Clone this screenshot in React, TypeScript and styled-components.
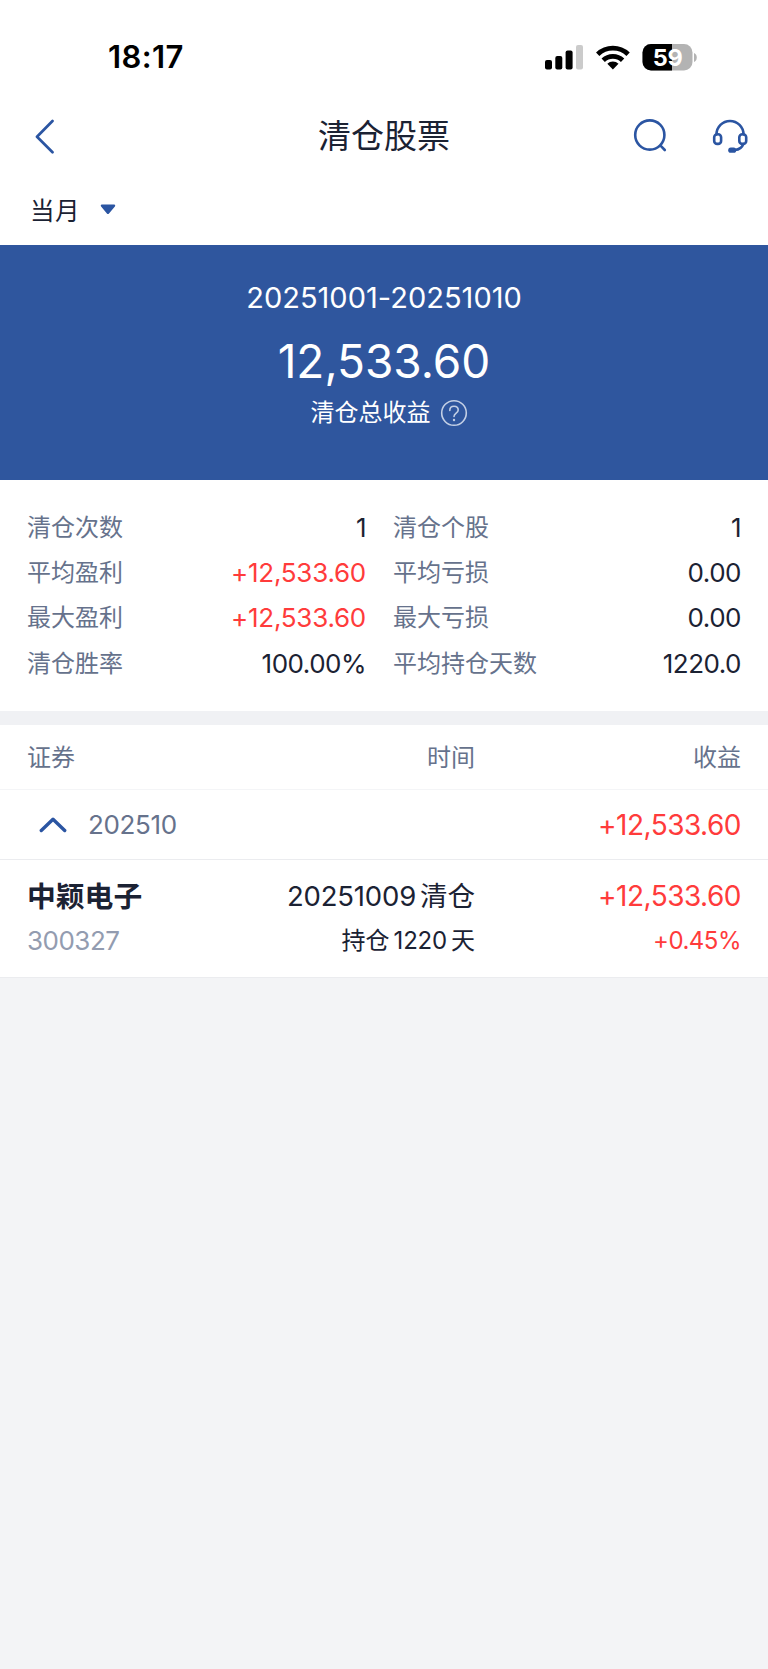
import React from 'react';
import styled, { createGlobalStyle } from 'styled-components';

const GlobalStyle = createGlobalStyle`
  * { box-sizing: border-box; }
  html, body { margin: 0; padding: 0; background: #f3f4f6; }
  body {
    font-family: Inter, "Noto Sans CJK SC", sans-serif;
    color: #1b2233;
    -webkit-font-smoothing: antialiased;
  }
`;

const BLUE = '#2b55a2';
const RED = '#ff3b3b';
const MUTED = '#66728c';

const Screen = styled.main`
  width: 768px;
  min-height: 1669px;
  background: #f3f4f6;
`;

const StatusBar = styled.div`
  height: 100px;
  padding: 14px 71px 0 108px;
  display: flex;
  align-items: center;
  justify-content: space-between;
  background: #fff;
`;

const Clock = styled.span`
  font-size: 31px;
  font-weight: 600;
  line-height: 36px;
  letter-spacing: 0.4px;
  color: #000;
`;

const NavBar = styled.header`
  height: 72px;
  padding: 0 20px 0 34px;
  display: grid;
  grid-template-columns: 1fr auto 1fr;
  align-items: center;
  background: #fff;
`;

const Title = styled.h1`
  margin: 0 0 0 -14px;
  font-size: 33px;
  font-weight: 400;
  line-height: 44px;
`;

const NavActions = styled.div`
  display: flex;
  justify-content: flex-end;
  gap: 45px;
`;

const Filter = styled.div`
  height: 73px;
  padding: 4px 0 0 30px;
  display: flex;
  align-items: center;
  gap: 20px;
  font-size: 24.5px;
  line-height: 34px;
  letter-spacing: 0.5px;
  background: #fff;
  svg { margin-top: -2px; }
`;

const Summary = styled.section`
  height: 235px;
  padding-top: 32px;
  display: flex;
  flex-direction: column;
  align-items: center;
  color: #fff;
  background: #2f569e;
`;

const Period = styled.div`
  font-size: 29px;
  line-height: 42px;
  letter-spacing: 0.02px;
`;

const Total = styled.div`
  margin-top: 11px;
  font-size: 46px;
  line-height: 62px;
  letter-spacing: 0;
`;

const TotalLabel = styled.div`
  margin: 4px 0 0 10px;
  display: flex;
  align-items: center;
  gap: 9px;
  font-size: 24px;
  line-height: 34px;
`;

const Stats = styled.section`
  height: 231px;
  padding: 25px 27px 0 27px;
  display: grid;
  grid-template-columns: 339px 348px;
  grid-auto-rows: 45.4px;
  column-gap: 27px;
  background: #fff;
`;

const Stat = styled.div`
  display: flex;
  align-items: center;
  justify-content: space-between;
`;

const StatLabel = styled.span`
  font-size: 24px;
  line-height: 34px;
  color: ${MUTED};
`;

const StatValue = styled.span<{ $up?: boolean }>`
  font-size: 26px;
  line-height: 34px;
  letter-spacing: ${p => (p.$up ? -0.25 : -0.5)}px;
  color: ${p => (p.$up ? RED : 'inherit')};
`;

const Band = styled.div`
  height: 14px;
  background: #f0f1f4;
`;

const List = styled.section`
  background: #fff;
`;

const Columns = styled.div`
  display: grid;
  grid-template-columns: 200px 248px 266px;
  padding: 0 27px;
`;

const ListHead = styled(Columns)`
  height: 65px;
  padding-top: 1px;
  align-items: center;
  border-bottom: 1px solid #f4f5f7;
  font-size: 24px;
  line-height: 34px;
  color: ${MUTED};
`;

const Cell = styled.div<{ $right?: boolean }>`
  text-align: ${p => (p.$right ? 'right' : 'left')};
  white-space: nowrap;
`;

const Group = styled.div`
  height: 70px;
  padding: 0 27px 0 39px;
  display: flex;
  align-items: center;
  border-bottom: 1px solid #ebecef;
`;

const Month = styled.span`
  margin: 0 auto 0 21px;
  font-size: 26px;
  line-height: 34px;
  letter-spacing: -0.35px;
  color: ${MUTED};
`;

const Profit = styled.span`
  font-size: 28px;
  letter-spacing: -0.5px;
  color: ${RED};
`;

const Holding = styled(Columns)`
  height: 118px;
  padding-top: 15px;
  grid-template-rows: 44px 44px;
  border-bottom: 1px solid #ebecef;
  line-height: 43px;
`;

const Name = styled.span`
  font-size: 28.8px;
  font-weight: 700;
`;

const Code = styled.span`
  font-size: 26px;
  letter-spacing: -0.5px;
  color: #939cb0;
`;

const ClosedOn = styled.span`
  font-size: 27.5px;
`;

const HeldFor = styled.span`
  font-size: 24px;
`;

const Digits = styled.span<{ $before?: number }>`
  margin: 0 4px 0 ${p => p.$before ?? 0}px;
  letter-spacing: -0.2px;
`;

const Rate = styled.span`
  font-size: 24px;
  letter-spacing: -0.5px;
  color: ${RED};
`;

const StatusIcons = () => (
  <svg width="153" height="28" viewBox="544 42 153 28">
    <rect x="545" y="59" width="7" height="9.5" rx="2" />
    <rect x="555.3" y="55" width="7" height="13.5" rx="2" />
    <rect x="565.6" y="49.5" width="7" height="19" rx="2" />
    <rect x="576" y="44" width="7" height="24.5" rx="2" fill="#cbcbcb" />
    <g fill="none" stroke="#000" strokeWidth="4.8">
      <path d="M597.7 53.2A22 22 0 0 1 628.1 53.2" />
      <path d="M603.2 59.2A14 14 0 0 1 622.6 59.2" />
    </g>
    <path d="M612.9 68.4l-5.6-5.6a8 8 0 0 1 11.2 0z" />
    <clipPath id="level"><rect x="642" y="42" width="30" height="28" /></clipPath>
    <rect x="642.5" y="43" width="50" height="26.5" rx="8.5" fill="#b3b3b3" />
    <rect x="642.5" y="43" width="50" height="26.5" rx="8.5" clipPath="url(#level)" />
    <path d="M694 52c3.7 1 3.7 8 0 9z" fill="#b3b3b3" />
    <text x="667.6" y="64.7" textAnchor="middle" fontSize="23.5" fontWeight="650" fill="#fff" letterSpacing="-.2">59</text>
  </svg>
);

const BackIcon = () => (
  <svg width="22" height="36" viewBox="34 118.5 22 36" fill="none" stroke={BLUE} strokeWidth="2.7" strokeLinecap="round" strokeLinejoin="round">
    <path d="M52.5 121.5L37 137.3l15.5 15.5" />
  </svg>
);

const SearchIcon = () => (
  <svg width="34" height="36" viewBox="632.5 118 34 36" fill="none" stroke={BLUE} strokeWidth="2.6" strokeLinecap="round">
    <circle cx="649.3" cy="135" r="14.6" />
    <path d="M660 145.7l4.3 4.3" />
  </svg>
);

const ServiceIcon = () => (
  <svg width="36" height="36" viewBox="711 118 36 36" fill="none" stroke={BLUE} strokeWidth="2.6" strokeLinecap="round">
    <path d="M715.5 134.5a13.5 13.5 0 0 1 27 0" />
    <rect x="713.2" y="134.3" width="6.9" height="9.6" rx="3" />
    <rect x="738.3" y="134.3" width="6.9" height="9.6" rx="3" />
    <path d="M742.3 144c-1.2 3.4-4.3 5.6-8.3 6" />
    <path d="M729.8 150.2h2.8" strokeWidth="5.2" />
  </svg>
);

const CaretIcon = () => (
  <svg width="16" height="11" viewBox="0 0 16 11">
    <path d="M1.8.5h12.4c1 0 1.4 1.2.7 2L9 9.4c-.6.7-1.5.7-2.1 0L1.1 2.5C.4 1.7.8.5 1.8.5z" fill={BLUE} />
  </svg>
);

const HelpIcon = () => (
  <svg width="28" height="28" viewBox="0 0 28 28" fill="none" stroke="#c3cfe5" strokeWidth="1.6">
    <circle cx="14" cy="14" r="12.3" />
    <path d="M9.8 11.4c0-2.7 1.7-4.2 4.2-4.2s4.2 1.5 4.2 3.7c0 3.1-4.2 3.2-4.2 6.5" strokeLinecap="round" />
    <circle cx="14" cy="21" r="1.2" fill="#c3cfe5" stroke="none" />
  </svg>
);

const ChevronUp = () => (
  <svg width="28" height="18" viewBox="0 0 28 18" fill="none" stroke={BLUE} strokeWidth="3.4" strokeLinecap="round" strokeLinejoin="round">
    <path d="M2.3 14.5L14 3.3l11.7 11.2" />
  </svg>
);

const stats = [
  { label: '清仓次数', value: '1' },
  { label: '清仓个股', value: '1' },
  { label: '平均盈利', value: '+12,533.60', up: true },
  { label: '平均亏损', value: '0.00' },
  { label: '最大盈利', value: '+12,533.60', up: true },
  { label: '最大亏损', value: '0.00' },
  { label: '清仓胜率', value: '100.00%' },
  { label: '平均持仓天数', value: '1220.0' },
];

export default function App() {
  return (
    <Screen>
      <GlobalStyle />
      <StatusBar>
        <Clock>18:17</Clock>
        <StatusIcons />
      </StatusBar>
      <NavBar>
        <BackIcon />
        <Title>清仓股票</Title>
        <NavActions>
          <SearchIcon />
          <ServiceIcon />
        </NavActions>
      </NavBar>
      <Filter>
        当月
        <CaretIcon />
      </Filter>
      <Summary>
        <Period>20251001-20251010</Period>
        <Total>12,533.60</Total>
        <TotalLabel>
          清仓总收益
          <HelpIcon />
        </TotalLabel>
      </Summary>
      <Stats>
        {stats.map(s => (
          <Stat key={s.label}>
            <StatLabel>{s.label}</StatLabel>
            <StatValue $up={s.up}>{s.value}</StatValue>
          </Stat>
        ))}
      </Stats>
      <Band />
      <List>
        <ListHead>
          <Cell>证券</Cell>
          <Cell $right>时间</Cell>
          <Cell $right>收益</Cell>
        </ListHead>
        <Group>
          <ChevronUp />
          <Month>202510</Month>
          <Profit>+12,533.60</Profit>
        </Group>
        <Holding>
          <Cell><Name>中颖电子</Name></Cell>
          <Cell $right><ClosedOn><Digits>20251009</Digits>清仓</ClosedOn></Cell>
          <Cell $right><Profit>+12,533.60</Profit></Cell>
          <Cell><Code>300327</Code></Cell>
          <Cell $right><HeldFor>持仓<Digits $before={4}>1220</Digits>天</HeldFor></Cell>
          <Cell $right><Rate>+0.45%</Rate></Cell>
        </Holding>
      </List>
    </Screen>
  );
}
